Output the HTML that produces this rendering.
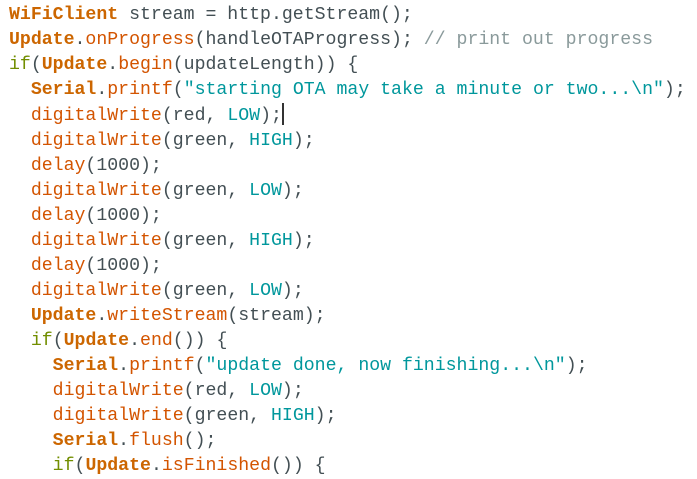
<!DOCTYPE html>
<html><head><style>
body{margin:0;background:#fff;width:697px;height:475px;overflow:hidden}
pre{margin:0;padding:3px 0 0 9px;font-family:"Liberation Mono","Courier New",monospace;font-size:18.2px;line-height:25px;color:#434f54}
.k{color:#cc6600;font-weight:bold}
.f{color:#d35400}
.c{color:#728e00}
.s{color:#00979c}
.m{color:#8a9a9b}
.cur{display:inline-block;width:0;border-left:2px solid #333;height:22px;vertical-align:-5px}
</style></head><body><pre><span class="k">WiFiClient</span> stream = http.getStream();
<span class="k">Update</span>.<span class="f">onProgress</span>(handleOTAProgress); <span class="m">// print out progress</span>
<span class="c">if</span>(<span class="k">Update</span>.<span class="f">begin</span>(updateLength)) {
  <span class="k">Serial</span>.<span class="f">printf</span>(<span class="s">"starting OTA may take a minute or two...\n"</span>);
  <span class="f">digitalWrite</span>(red, <span class="s">LOW</span>);<span class="cur"></span>
  <span class="f">digitalWrite</span>(green, <span class="s">HIGH</span>);
  <span class="f">delay</span>(1000);
  <span class="f">digitalWrite</span>(green, <span class="s">LOW</span>);
  <span class="f">delay</span>(1000);
  <span class="f">digitalWrite</span>(green, <span class="s">HIGH</span>);
  <span class="f">delay</span>(1000);
  <span class="f">digitalWrite</span>(green, <span class="s">LOW</span>);
  <span class="k">Update</span>.<span class="f">writeStream</span>(stream);
  <span class="c">if</span>(<span class="k">Update</span>.<span class="f">end</span>()) {
    <span class="k">Serial</span>.<span class="f">printf</span>(<span class="s">"update done, now finishing...\n"</span>);
    <span class="f">digitalWrite</span>(red, <span class="s">LOW</span>);
    <span class="f">digitalWrite</span>(green, <span class="s">HIGH</span>);
    <span class="k">Serial</span>.<span class="f">flush</span>();
    <span class="c">if</span>(<span class="k">Update</span>.<span class="f">isFinished</span>()) {
</pre></body></html>
